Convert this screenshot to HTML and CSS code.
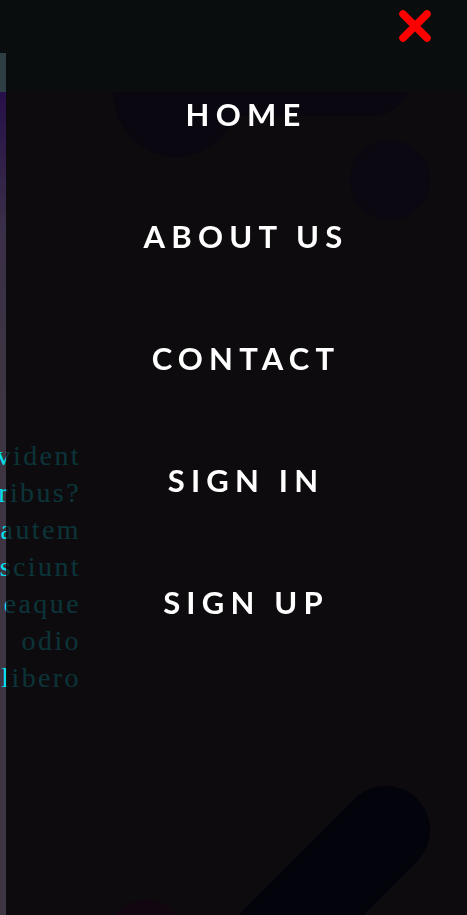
FILE: index.html
```html
<!DOCTYPE html>
<html lang="en">
<head>
<meta charset="utf-8">
<title>Menu</title>
<link rel="stylesheet" href="styles.css">
</head>
<body>
<div class="page">
  <div class="strip"></div>
  <main class="content">
    <p class="lorem">
      <span>Sapiente provident</span>
      <span>temporibus?</span>
      <span>Dolorum autem</span>
      <span>Eum nesciunt</span>
      <span>Ipsa eaque</span>
      <span>odio</span>
      <span>Vitae libero</span>
    </p>
  </main>
</div>

<div class="overlay">
  <svg class="shapes" width="461" height="915" viewBox="0 0 461 915" aria-hidden="true">
    <circle cx="170" cy="95" r="62" fill="#0a0711"/>
    <rect x="104" y="40" width="300" height="76" rx="38" fill="#0a0711"/>
    <circle cx="384" cy="180" r="40" fill="#0c0812"/>
    <line x1="380" y1="830" x2="230" y2="980" stroke="#03030b" stroke-width="88" stroke-linecap="round"/>
    <circle cx="140" cy="940" r="40" fill="#120610"/>
  </svg>
  <header class="bar">
    <button class="close" aria-label="Close menu">
      <svg width="34" height="34" viewBox="0 0 34 34">
        <path d="M5 5 L29 29 M29 5 L5 29" stroke="#ff0000" stroke-width="7.5" stroke-linecap="round"/>
      </svg>
    </button>
  </header>
  <nav class="menu">
    <a href="#">HOME</a>
    <a href="#">ABOUT US</a>
    <a href="#">CONTACT</a>
    <a href="#">SIGN IN</a>
    <a href="#">SIGN UP</a>
  </nav>
</div>
</body>
</html>
```

FILE: styles.css
```css
* { box-sizing: border-box; }

html, body {
  margin: 0;
  height: 100%;
  overflow: hidden;
  background: #0d0b0e;
}

.page {
  display: flex;
  min-height: 915px;
}

.strip {
  width: 6px;
  flex: none;
  background: linear-gradient(to bottom,
    #0a0d0e 0, #0a0d0e 53px,
    #2f3d45 53px, #2f3d45 92px,
    #27104a 92px, #3a2f48 230px, #3d3541 400px, #3d3541 100%);
}

.content {
  flex: 1;
  padding-top: 437px;
}

.lorem {
  margin: 0 0 0 -100px;
  width: 175px;
  display: flex;
  flex-direction: column;
  align-items: flex-end;
  font-family: "Liberation Serif", "Times New Roman", serif;
  font-size: 28px;
  line-height: 37px;
  letter-spacing: 2.4px;
  color: #00e0ee;
  white-space: nowrap;
}

.overlay {
  position: fixed;
  top: 0;
  left: 6px;
  right: 0;
  bottom: 0;
  background: rgba(13, 11, 14, 0.81);
  display: flex;
  flex-direction: column;
  overflow: hidden;
}

.shapes {
  position: absolute;
  top: 0;
  left: 0;
  z-index: 0;
}

.bar {
  position: relative;
  z-index: 1;
  height: 92px;
  flex: none;
  background: #0a0d0e;
  display: flex;
  justify-content: flex-end;
  align-items: flex-start;
  padding: 9px 35px 0 0;
}

.close {
  border: 0;
  padding: 0;
  background: none;
  width: 34px;
  height: 34px;
  display: block;
}

.close svg { display: block; }

.menu {
  position: relative;
  z-index: 1;
  display: flex;
  flex-direction: column;
  align-items: center;
  gap: 78px;
  padding-left: 19px;
}

.menu a {
  font-family: Lato, "Open Sans", sans-serif;
  font-weight: 700;
  font-size: 31px;
  line-height: 44px;
  letter-spacing: 6.2px;
  color: #ffffff;
  text-decoration: none;
}
```
